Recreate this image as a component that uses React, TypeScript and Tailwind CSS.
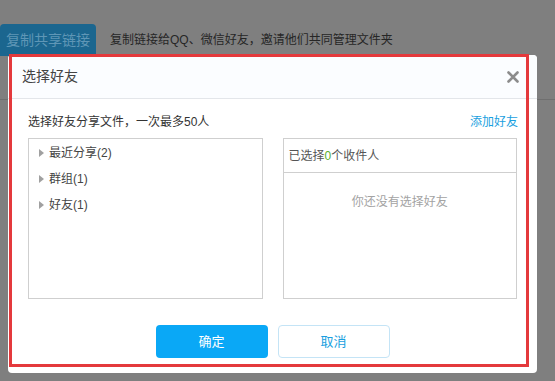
import React from "react";

const CJK = { fontFamily: '"Liberation Sans", "Noto Sans CJK SC", sans-serif' };

const GROUPS = ["最近分享(2)", "群组(1)", "好友(1)"];

function Caret() {
  return (
    <svg width="5" height="8" viewBox="0 0 5 8" className="shrink-0">
      <path d="M0 0 L5 4 L0 8 Z" fill="#a0a0a0" />
    </svg>
  );
}

export default function App() {
  return (
    <div className="relative w-[555px] h-[381px] overflow-hidden bg-[#7f7f7f]" style={CJK}>
      {/* page behind the mask */}
      <div className="flex items-center gap-[14px] pt-[24px]">
        <div className="w-[96px] h-[32px] rounded-t-[4px] bg-[#1b668f] text-[#5f96b6] text-[14px] flex items-center justify-center">
          复制共享链接
        </div>
        <span className="text-[12px] text-[#262626]">复制链接给QQ、微信好友，邀请他们共同管理文件夹</span>
      </div>
      <div className="mt-[43px] h-px bg-[#6f6f6f]" />

      {/* dialog */}
      <div className="absolute left-[8px] top-[55px] w-[529px] h-[318px] bg-white rounded-[4px] flex flex-col">
        <div className="h-[44px] shrink-0 flex items-center justify-between pl-[14px] pr-[18px] border-b border-[#e3e6ea] bg-[#fbfdff] rounded-t-[4px]">
          <span className="text-[14px] text-[#444]">选择好友</span>
          <svg width="12" height="12" viewBox="0 0 12 12">
            <path d="M1.5 1.5 L10.5 10.5 M10.5 1.5 L1.5 10.5" stroke="#8c8c8c" strokeWidth="2.6" strokeLinecap="round" />
          </svg>
        </div>

        <div className="flex flex-col px-[20px] pt-[14px]">
          <div className="flex items-center justify-between h-[17px] mb-[8px]">
            <span className="text-[12px] text-[#333]">选择好友分享文件，一次最多50人</span>
            <span className="text-[12px] text-[#1a9fe0] -mr-[1px]">添加好友</span>
          </div>

          <div className="flex gap-[20px]">
            <div className="w-[235px] h-[161px] border border-[#cfcfcf] pt-[1px] flex flex-col">
              {GROUPS.map((g) => (
                <div key={g} className="h-[26px] flex items-center gap-[5px] pl-[10px]">
                  <Caret />
                  <span className="text-[12px] text-[#444]">{g}</span>
                </div>
              ))}
            </div>
            <div className="w-[235px] h-[161px] border border-[#cfcfcf] flex flex-col">
              <div className="h-[34px] shrink-0 flex items-center pl-[5px] border-b border-[#cfcfcf] text-[12px] text-[#555]">
                已选择<span className="text-[#5cb02e]">0</span>个收件人
              </div>
              <div className="flex justify-center pt-[20px] text-[12px] text-[#a3a3a3]">你还没有选择好友</div>
            </div>
          </div>
        </div>

        <div className="flex justify-center gap-[10px] mt-[26px]">
          <button className="w-[112px] h-[33px] rounded-[4px] bg-[#0aa8f6] text-white text-[13px]">确定</button>
          <button className="w-[112px] h-[33px] rounded-[4px] bg-white border border-[#c4e4f6] text-[#1a9fe0] text-[13px]">取消</button>
        </div>
      </div>

      {/* red annotation frame */}
      <div className="absolute left-[9px] top-[54px] w-[520px] h-[313px] border-[3px] border-[#e4393c] pointer-events-none" />
    </div>
  );
}
